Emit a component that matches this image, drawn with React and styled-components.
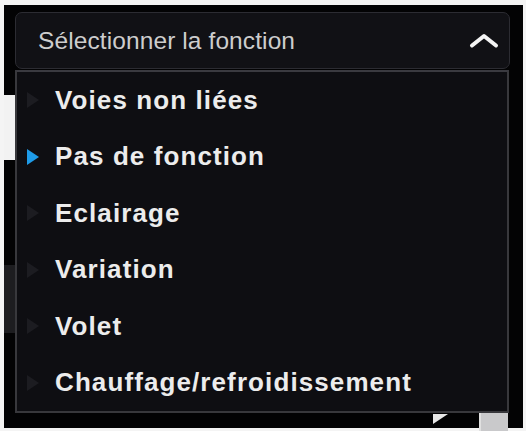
import React from 'react';
import styled, { createGlobalStyle } from 'styled-components';

const GlobalStyle = createGlobalStyle`
	html, body {
		margin: 0;
		padding: 0;
		background: #f4f4f4;
	}
	body {
		font-family: "Liberation Sans", Arial, sans-serif;
	}
`;

const Page = styled.div`
	width: 526px;
	height: 431px;
	padding: 5px 3px 3px 4px;
	box-sizing: border-box;
	overflow: hidden;
`;

const Frame = styled.div`
	display: flex;
	height: 100%;
	background: #030304;
`;

const Strip = styled.div`
	width: 11px;
	flex: none;
	display: flex;
	flex-direction: column;
	padding-top: 90px;
`;

const StripBlock = styled.div`
	height: ${(p) => p.h}px;
	background: ${(p) => p.bg};
	flex: none;
`;

const Main = styled.div`
	width: 495px;
	flex: none;
	display: flex;
	flex-direction: column;
	padding-top: 7px;
`;

const Header = styled.div`
	flex: none;
	height: 57px;
	box-sizing: border-box;
	display: flex;
	align-items: center;
	justify-content: space-between;
	padding: 0 10px 0 22px;
	background: #111115;
	border: 1.5px solid #2c2c32;
	border-radius: 7px;
`;

const HeaderLabel = styled.span`
	font-size: 24.5px;
	color: #cdcdcd;
	letter-spacing: 0.1px;
`;

const Panel = styled.ul`
	flex: none;
	list-style: none;
	margin: 1px 1px 0 0;
	padding: 0;
	height: 343px;
	box-sizing: border-box;
	background: #0e0e12;
	border: 2px solid #38383c;
	border-top-color: #3a3a40;
`;

const Item = styled.li`
	height: 56.5px;
	display: flex;
	align-items: center;
	gap: 16px;
	padding-left: 10px;
`;

const Marker = styled.span`
	width: 0;
	height: 0;
	border-top: 8.5px solid transparent;
	border-bottom: 8.5px solid transparent;
	border-left: 12px solid ${(p) => (p.active ? '#1e9be8' : '#1c1c21')};
	flex: none;
`;

const ItemLabel = styled.span`
	font-size: 26px;
	font-weight: 700;
	letter-spacing: 1.1px;
	color: #ececec;
`;

const Footer = styled.div`
	flex: none;
	display: flex;
	align-items: flex-start;
	padding-left: 418px;
	gap: 31px;
`;

const Corner = styled.span`
	width: 0;
	height: 0;
	margin-top: 1px;
	border-top: 10px solid #e8e8e8;
	border-right: 15px solid transparent;
	flex: none;
`;

const Knob = styled.span`
	width: 29px;
	height: 22px;
	background: #c9c9cb;
	border-left: 2px solid #e0e0e0;
	box-sizing: border-box;
	flex: none;
`;

const items = [
	'Voies non liées',
	'Pas de fonction',
	'Eclairage',
	'Variation',
	'Volet',
	'Chauffage/refroidissement',
];

const ChevronUp = () => (
	<svg width="30" height="16" viewBox="0 0 30 16">
		<polyline
			points="3,12.5 15,3 27,12.5"
			fill="none"
			stroke="#f4f4f4"
			strokeWidth="4"
			strokeLinecap="round"
			strokeLinejoin="round"
		/>
	</svg>
);

export default function App() {
	return (
		<>
			<GlobalStyle />
			<Page>
				<Frame>
					<Strip>
						<StripBlock h={65} bg="#f2f2f2" />
						<StripBlock h={105} bg="#030304" />
						<StripBlock h={68} bg="#1d1d20" />
					</Strip>
					<Main>
						<Header>
							<HeaderLabel>Sélectionner la fonction</HeaderLabel>
							<ChevronUp />
						</Header>
						<Panel>
							{items.map((label, i) => (
								<Item key={label}>
									<Marker active={i === 1} />
									<ItemLabel>{label}</ItemLabel>
								</Item>
							))}
						</Panel>
						<Footer>
							<Corner />
							<Knob />
						</Footer>
					</Main>
				</Frame>
			</Page>
		</>
	);
}
